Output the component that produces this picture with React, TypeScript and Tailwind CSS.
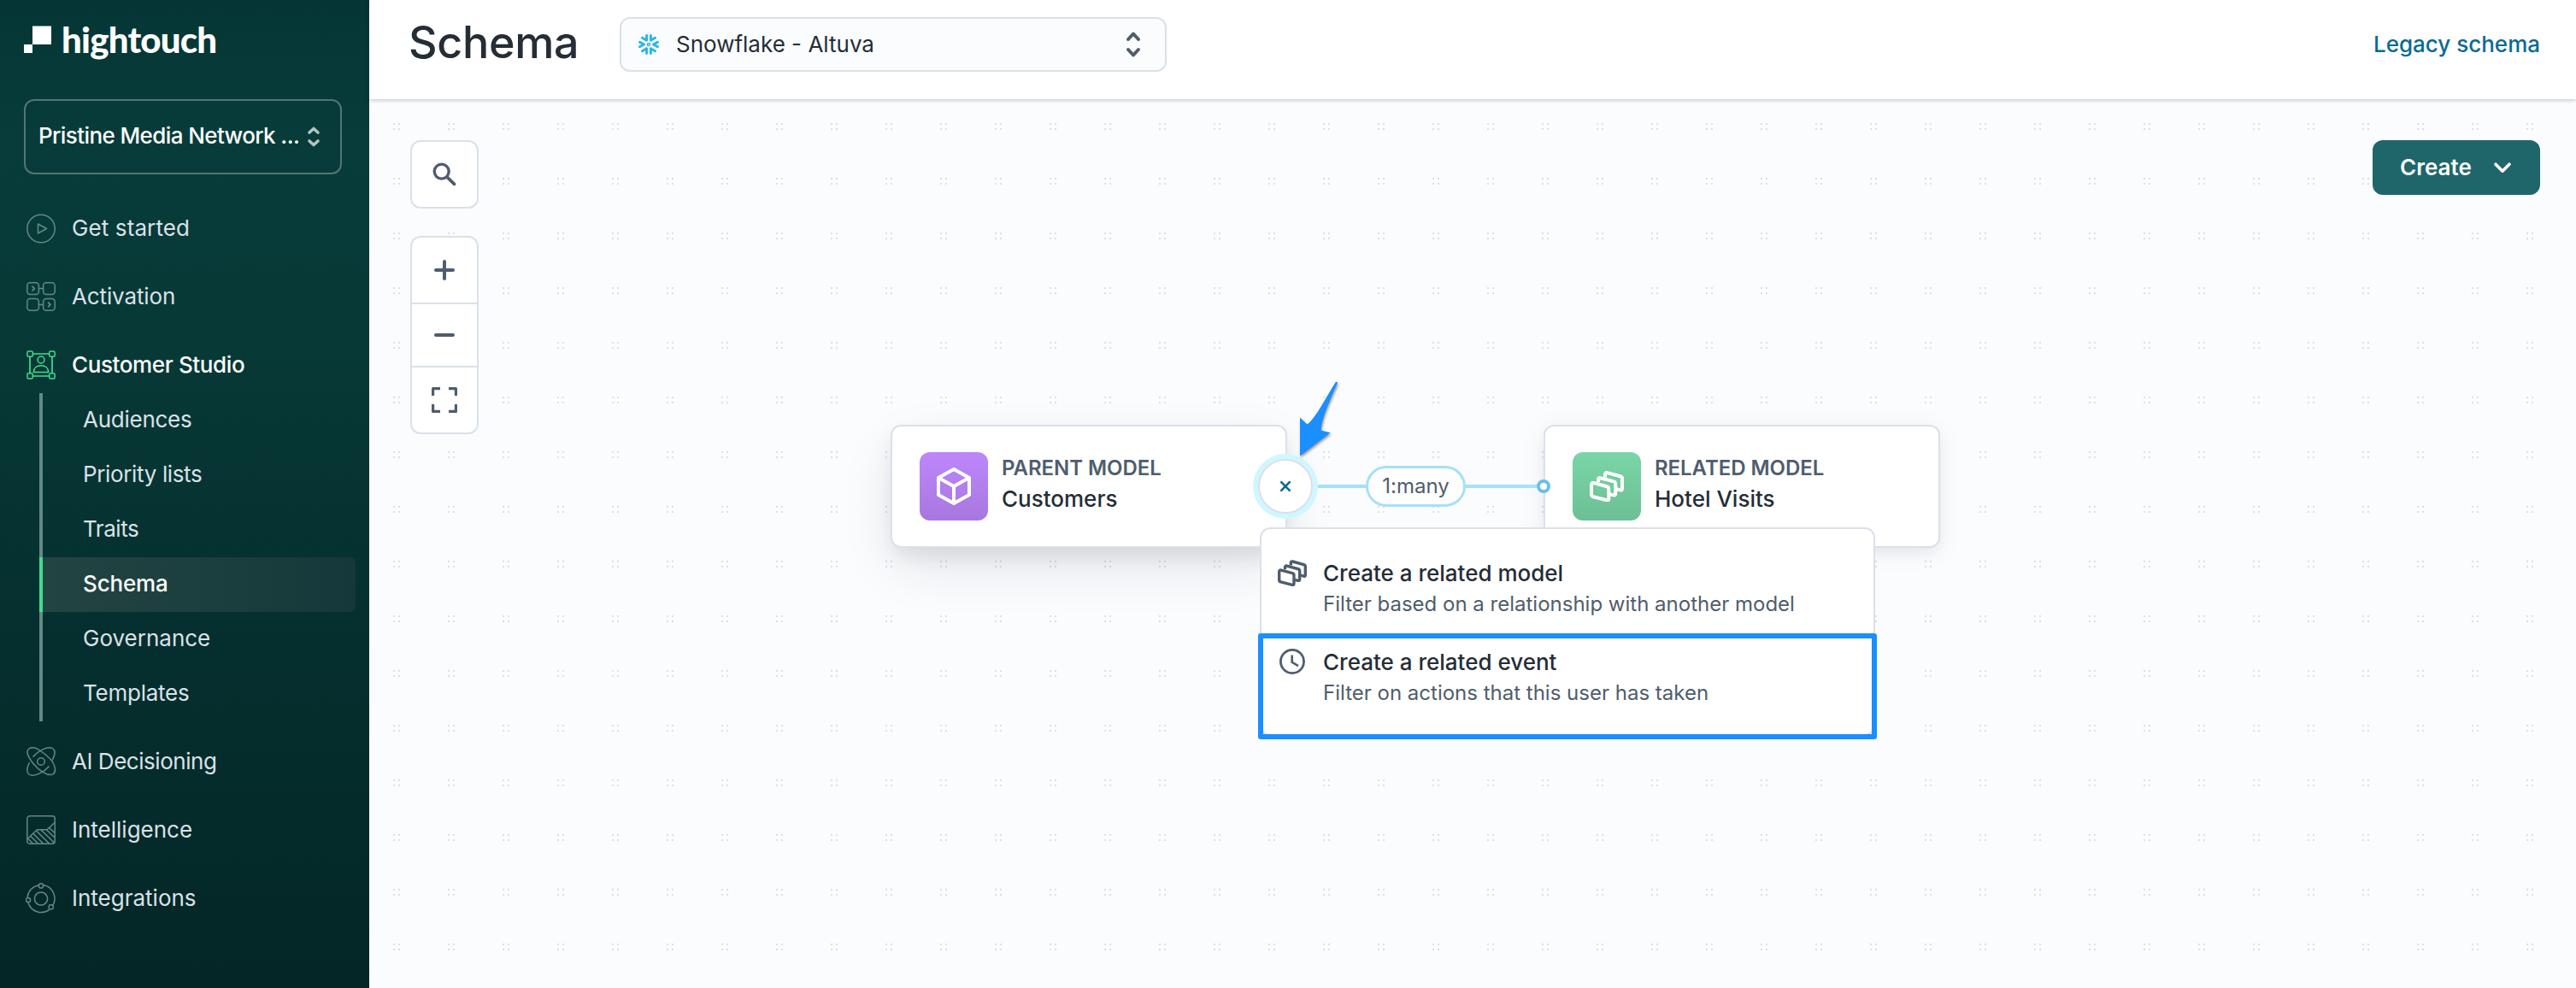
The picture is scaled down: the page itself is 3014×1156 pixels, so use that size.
import type { ReactNode } from "react";

/* ---------- Icons ---------- */

function Chevrons({ className, d }: { className: string; d: string }) {
  return (
    <svg className={className} viewBox="0 0 16 28" fill="none" stroke="currentColor" strokeWidth="3.6" strokeLinecap="round" strokeLinejoin="round">
      <path d={d} />
    </svg>
  );
}

function NavIcon({ children }: { children: ReactNode }) {
  return (
    <svg className="h-9 w-9 shrink-0" viewBox="0 0 36 36" fill="none" stroke="currentColor" strokeWidth="1.5" strokeLinejoin="round">
      {children}
    </svg>
  );
}

function PlayIcon() {
  return (
    <NavIcon>
      <circle cx="18" cy="18.500" r="16.200" />
      <path d="M14.500 13v11l10-5.500z" />
    </NavIcon>
  );
}

function ActivationIcon() {
  return (
    <NavIcon>
      <rect x="1.800" y="1.800" width="13.600" height="13.600" rx="3.500" />
      <rect x="20.600" y="1.800" width="13.600" height="13.600" rx="3.500" />
      <rect x="1.800" y="20.600" width="13.600" height="13.600" rx="3.500" />
      <rect x="20.600" y="20.600" width="13.600" height="13.600" rx="3.500" />
      <path d="M15.400 8.600h5.200M15.400 27.400h5.200" />
      <path d="M7.600 5.800l2.700 2.800-2.700 2.800M26.200 24.600l2.700 2.800-2.700 2.800" strokeWidth="1.800" />
    </NavIcon>
  );
}

function StudioIcon() {
  return (
    <NavIcon>
      <path d="M8.500 5h19M8.500 31h19M5 8.500v19M31 8.500v19" strokeWidth="1.700" />
      <rect x="1.900" y="1.900" width="6.400" height="6.400" rx="1.500" />
      <rect x="27.700" y="1.900" width="6.400" height="6.400" rx="1.500" />
      <rect x="1.900" y="27.700" width="6.400" height="6.400" rx="1.500" />
      <rect x="27.700" y="27.700" width="6.400" height="6.400" rx="1.500" />
      <circle cx="18" cy="12" r="4" />
      <path d="M9.300 26.500c0-5 3.700-7.800 8.700-7.800s8.700 2.800 8.700 7.800z" />
    </NavIcon>
  );
}

function AtomIcon() {
  return (
    <NavIcon>
      <circle cx="18" cy="18" r="4.300" />
      <path d="M8.500 12.500C14 6 26 -1 32 3c4 3 1.500 9-1 13.500M27.500 23.500C22 30 10 37 4 33c-4-3-1.500-10 .5-14" />
      <path d="M31 17.500c4.500 8 4.500 13 .8 15.400C26 36 15 28 9 20.500S-.500 6 4 3c4-2.500 10 0 14 3 7 5 10.500 8.500 13 11.500z" />
    </NavIcon>
  );
}

function IntelligenceIcon() {
  return (
    <NavIcon>
      <rect x="1.800" y="1.800" width="32.400" height="32.400" rx="3" />
      <path d="M2 28.500L13.500 17.800h11.500L34 9.500" />
      <path d="M3 28.500l5.500 5.500M6 25.500l8.500 8.500M9 22.500l11.500 11.500M12.500 19l15 15M18 18l16 15.500M24.500 18l9.500 9M27.500 15.500l6.500 6" strokeWidth="1.700" />
    </NavIcon>
  );
}

function IntegrationsIcon() {
  return (
    <NavIcon>
      <circle cx="18" cy="18.500" r="7.600" />
      <path d="M20.800 2.600A16 16 0 0 1 31.400 27M28 31.200A16 16 0 0 1 2.900 23M2.100 17A16 16 0 0 1 15.300 2.700" />
      <circle cx="18" cy="3.400" r="2.600" />
      <circle cx="3" cy="20" r="2.600" />
      <rect x="27.200" y="25.800" width="5" height="5" rx="1.600" />
    </NavIcon>
  );
}

function CardsIcon({ className }: { className: string }) {
  return (
    <svg className={className} viewBox="0 0 40 36" fill="none" stroke="currentColor" strokeWidth="4" strokeLinejoin="round">
      <path d="M2 16.200c0-1.900 1-2.600 2.700-2.200l15.500 4.200c1.400.4 2.100 1.300 2.100 2.700v11.800c0 1.400-.7 2-2.200 1.600L4.200 30.200C2.700 29.800 2 29 2 27.600z" />
      <path d="M10 13V10.200C10 8.500 11 7.800 12.500 8.200l15.700 4.200c1.400.4 2 1.200 2 2.600v11.800c0 1.300-.8 1.900-2.200 1.600l-4.500-1.200" />
      <path d="M18 7.500V4C18 2.400 19 1.700 20.500 2.100l15.300 4.200c1.500.4 2.200 1.300 2.200 2.700v11.800c0 1.400-.8 2-2.200 1.600l-4.300-1.200" />
    </svg>
  );
}

function CubeIcon() {
  return (
    <svg className="h-11 w-10" viewBox="0 0 40 44" fill="none" stroke="currentColor" strokeWidth="4" strokeLinejoin="round">
      <path d="M20 2l18 10v20L20 42 2 32V12zM2 12l18 10 18-10M20 22v20" />
    </svg>
  );
}

function SnowflakeIcon() {
  return (
    <svg className="h-6 w-6 shrink-0 text-[#29b5e8]" viewBox="0 0 24 24" fill="none" stroke="currentColor" strokeWidth="2.900" strokeLinecap="round" strokeLinejoin="round">
      <circle cx="12" cy="12" r="1.600" strokeWidth="1.500" />
      <path d="M9.600 1.500v5.800L4.500 4.300M14.400 1.500v5.800l5.100-3M9.600 22.500v-5.800l-5.100 3M14.400 22.500v-5.800l5.100 3M1.500 9.200L6.500 12l-5 2.800M22.500 9.200L17.500 12l5 2.800" />
    </svg>
  );
}

/* ---------- Sidebar ---------- */

function NavItem({ icon, label, text, active, className }: { icon: ReactNode; label: string; text: string; active?: boolean; className?: string }) {
  return (
    <a className={`flex h-20 items-center gap-[18px] pl-[30px] ${className ?? ""}`}>
      <span className={active ? "text-[#3ce08f]" : "text-[#628986]"}>{icon}</span>
      <span className={`text-[26px] leading-none whitespace-nowrap ${active ? "font-medium text-white" : "text-[#dbe1e8]"} ${text}`}>{label}</span>
    </a>
  );
}

const subItems = [
  { label: "Audiences", text: "tracking-[-0.26px]" },
  { label: "Priority lists", text: "tracking-[-0.36px]" },
  { label: "Traits", text: "tracking-[-0.45px]" },
  { label: "Schema", text: "tracking-[-0.16px]", active: true },
  { label: "Governance", text: "tracking-normal" },
  { label: "Templates", text: "tracking-[-0.24px]" },
];

function Sidebar() {
  return (
    <aside className="flex w-[432px] shrink-0 flex-col bg-[linear-gradient(180deg,#053635_0%,#073c3a_14%,#073936_35%,#05302f_62%,#042b2a_82%,#042626_100%)]">
      <div className="flex h-[116px] items-start pt-[30px] pl-7">
        <svg className="h-8 w-8" viewBox="0 0 32 32" fill="#fff">
          <path d="M10 .500h22V22H10zM0 22h10v10H0z" />
        </svg>
        <span className="-mt-[8px] ml-3 font-[Lato] text-[42px] leading-[48px] font-black tracking-[-0.8px] text-white">hightouch</span>
      </div>
      <button className="ml-7 flex h-[88px] w-[372px] items-center rounded-xl border-2 border-[#537673] pl-[15px] text-left">
        <span className="w-[314px] pb-0.5 text-[26px] leading-none font-medium tracking-[-0.6px] whitespace-nowrap text-white">Pristine Media Network ...</span>
        <Chevrons className="h-7 w-4 text-[#b4c4c3]" d="M3 9l5-4.500L13 9M3 19l5 4.500L13 19" />
      </button>
      <nav className="mt-[23px] flex flex-col">
        <NavItem icon={<PlayIcon />} label="Get started" text="tracking-[0.11px]" />
        <NavItem icon={<ActivationIcon />} label="Activation" text="tracking-[-0.12px]" />
        <NavItem icon={<StudioIcon />} label="Customer Studio" text="tracking-[-0.38px]" active />
        <div className="-mt-[7px] mr-4 ml-[46px] flex flex-col">
          {subItems.map((s) => (
            <a
              key={s.label}
              className={`flex h-16 items-center border-l-4 pb-0.5 pl-[47px] text-[26px] leading-none ${s.text} ${
                s.active
                  ? "rounded-r-lg border-[#3ce08f] bg-linear-to-r from-[#224543] to-[#15393a] font-medium text-white"
                  : "border-[#628986] text-[#dbe1e8]"
              }`}
            >
              {s.label}
            </a>
          ))}
        </div>
        <NavItem icon={<AtomIcon />} label="AI Decisioning" text="tracking-[-0.46px]" className="mt-[7px]" />
        <NavItem icon={<IntelligenceIcon />} label="Intelligence" text="tracking-normal" />
        <NavItem icon={<IntegrationsIcon />} label="Integrations" text="tracking-normal" />
      </nav>
    </aside>
  );
}

/* ---------- Header ---------- */

function Header() {
  return (
    <header className="relative z-10 flex h-[116px] shrink-0 items-start bg-white pr-[42px] pl-[46px] shadow-[0_2px_4px_rgba(30,41,59,0.16),0_0_6px_rgba(30,41,59,0.08)]">
      <h1 className="w-[247px] pt-5 text-[52px] leading-[60px] font-medium tracking-[-0.3px] text-[#252d36]">Schema</h1>
      <div className="mt-5 flex h-16 w-[640px] items-center rounded-xl border-2 border-[#dbe1e8] bg-[#fbfcfe] pr-[27px] pl-5">
        <SnowflakeIcon />
        <span className="ml-5 grow text-[26px] leading-none text-[#252d36]">Snowflake - Altuva</span>
        <svg className="h-9 w-5 text-[#4f5d6d]" viewBox="0 0 20 36" fill="none" stroke="currentColor" strokeWidth="4" strokeLinecap="round" strokeLinejoin="round">
          <path d="M4 12l6-6.500 6 6.500M4 24l6 6.500 6-6.500" />
        </svg>
      </div>
      <a className="mt-5 ml-auto flex h-16 items-center text-[26px] leading-none font-medium text-[#0b6a91]">Legacy schema</a>
    </header>
  );
}

/* ---------- Canvas ---------- */

function DotGrid() {
  return (
    <svg className="absolute inset-0 h-full w-full" shapeRendering="crispEdges">
      <pattern id="dots" x="28" y="28" width="64" height="64" patternUnits="userSpaceOnUse">
        <path d="M0 0h2v2H0zM6 0h2v2H6zM0 6h2v2H0zM6 6h2v2H6z" fill="#dcdfe7" />
      </pattern>
      <rect width="100%" height="100%" fill="url(#dots)" />
    </svg>
  );
}

function CanvasControls() {
  return (
    <div className="flex flex-col gap-8 text-[#4f5d6d]">
      <button className="flex h-20 w-20 items-center justify-center rounded-xl border-2 border-[#dbe1e8] bg-white">
        <svg className="h-8 w-8" viewBox="0 0 32 32" fill="none" stroke="currentColor" strokeWidth="3.400" strokeLinecap="round">
          <circle cx="12.700" cy="12.600" r="8.500" />
          <path d="M19.300 19.300l8.200 8" strokeWidth="3.800" />
        </svg>
      </button>
      <div className="flex h-[232px] w-20 flex-col overflow-hidden rounded-xl border-2 border-[#dbe1e8] bg-white">
        <button className="flex h-[78px] items-center justify-center border-b-2 border-[#dbe1e8]">
          <svg className="h-7 w-7" viewBox="0 0 28 28" fill="none" stroke="currentColor" strokeWidth="4" strokeLinecap="round">
            <path d="M14 4v20M4 14h20" />
          </svg>
        </button>
        <button className="flex h-[74px] items-center justify-center border-b-2 border-[#dbe1e8]">
          <svg className="h-7 w-7" viewBox="0 0 28 28" fill="none" stroke="currentColor" strokeWidth="4" strokeLinecap="round">
            <path d="M4 14h20" />
          </svg>
        </button>
        <button className="flex grow items-center justify-center">
          <svg className="h-8 w-8" viewBox="0 0 32 32" fill="none" stroke="currentColor" strokeWidth="3.200" strokeLinejoin="round">
            <path d="M11 2.600H2.600V11M21 2.600h8.400V11M11 29.400H2.600V21M21 29.400h8.400V21" />
          </svg>
        </button>
      </div>
    </div>
  );
}

function ModelNode({ kind, name, icon, tile, shadow, position }: { kind: string; name: string; icon: ReactNode; tile: string; shadow: string; position: string }) {
  return (
    <div className={`absolute flex h-36 w-[464px] items-center gap-4 rounded-xl border-2 border-[#dbe1e8] bg-white pl-8 ${shadow} ${position}`}>
      <div className={`flex h-20 w-20 items-center justify-center rounded-xl bg-linear-to-b text-white ${tile}`}>{icon}</div>
      <div className="flex flex-col pb-1.5">
        <span className="text-[24px] leading-9 font-semibold tracking-[-0.05px] text-[#4f5d6d]">{kind}</span>
        <span className="text-[26px] leading-9 font-medium text-[#252d36]">{name}</span>
      </div>
    </div>
  );
}

function MenuItem({ icon, title, text }: { icon: ReactNode; title: string; text: string }) {
  return (
    <div className="flex h-[104px] items-start pl-[19px]">
      <span className="mt-px flex h-8 w-[53px] items-center text-[#4f5d6d]">{icon}</span>
      <span className="flex flex-col whitespace-nowrap">
        <span className="text-[26px] leading-9 font-medium text-[#252d36]">{title}</span>
        <span className="text-[24px] leading-9 text-[#4f5d6d]">{text}</span>
      </span>
    </div>
  );
}

function RelationMenu() {
  return (
    <div className="absolute top-[501px] left-[1042px] h-[244px] w-[720px] rounded-xl border-2 border-[#dbe1e8] bg-white pt-[34px]">
      <MenuItem icon={<CardsIcon className="h-[31px] w-[34px]" />} title="Create a related model" text="Filter based on a relationship with another model" />
      <MenuItem
        icon={
          <svg className="ml-px h-8 w-8" viewBox="0 0 32 32" fill="none" stroke="currentColor" strokeWidth="2.800">
            <circle cx="16" cy="16" r="13.600" />
            <path d="M15.700 8.400v8.400l7.300 4.400" strokeWidth="2.600" />
          </svg>
        }
        title="Create a related event"
        text="Filter on actions that this user has taken"
      />
    </div>
  );
}

function Diagram() {
  return (
    <>
      <ModelNode
        kind="PARENT MODEL"
        name="Customers"
        icon={<CubeIcon />}
        tile="from-[#bd87fb] to-[#a877de]"
        shadow="shadow-[0_24px_64px_-8px_rgba(30,41,59,0.13),0_12px_24px_-4px_rgba(30,41,59,0.10)]"
        position="left-[610px] top-[381px]"
      />
      <ModelNode
        kind="RELATED MODEL"
        name="Hotel Visits"
        icon={<CardsIcon className="h-9 w-10" />}
        tile="from-[#7ad6a6] to-[#6cbf94]"
        shadow="shadow-[0_4px_32px_rgba(30,41,59,0.06),0_8px_16px_-4px_rgba(30,41,59,0.07)]"
        position="left-[1374px] top-[381px]"
      />
      <div className="absolute top-[445px] left-[1100px] flex w-[282px] items-center">
        <span className="h-1 w-[66px] bg-[#a5e0f9]" />
        <span className="-my-4 flex h-12 w-[117px] items-center justify-center rounded-full border-3 border-[#a5e0f9] bg-white text-[24px] leading-none text-[#4f5d6d]">1:many</span>
        <span className="h-1 grow bg-[#a5e0f9]" />
        <span className="h-4 w-4 rounded-full border-4 border-[#68c0e8] bg-white" />
      </div>
      <button className="absolute top-[415px] left-[1034px] flex h-[76px] w-[76px] items-center justify-center rounded-full bg-[#cff7ff]">
        <span className="flex h-16 w-16 items-center justify-center rounded-full border-2 border-[#dcdfe9] bg-white text-[#076b92]">
          <svg className="h-4 w-4" viewBox="0 0 16 16" fill="none" stroke="currentColor" strokeWidth="2.600" strokeLinecap="round">
            <path d="M3.200 3.200l9.600 9.600M12.800 3.200l-9.600 9.600" />
          </svg>
        </span>
      </button>
      <RelationMenu />
      <div className="absolute top-[625px] left-[1040px] h-[124px] w-[724px] rounded-[3px] border-6 border-[#1a8fff]" />
      <svg className="absolute top-[326px] left-[1080px] h-24 w-16 drop-shadow-[1px_2px_1.5px_rgba(0,0,0,0.4)]" viewBox="0 0 64 96" fill="#1a8fff">
        <path d="M50.500 5.500C51.500 4 53.500 4.600 52.800 6.600C47 20 35 44 33.600 61.500L44.600 64.200L9 91.500V46.600L17.400 54.600C27 48 40 22 50.500 5.500z" />
      </svg>
    </>
  );
}

export default function App() {
  return (
    <div className="flex h-[1156px] w-full overflow-hidden bg-[#fbfcfe] font-[Inter,sans-serif]">
      <Sidebar />
      <div className="flex grow flex-col">
        <Header />
        <main className="relative grow overflow-hidden">
          <DotGrid />
          <div className="relative flex items-start justify-between pt-12 pr-[42px] pl-12">
            <CanvasControls />
            <button className="flex h-16 w-[196px] items-center rounded-xl bg-[#1f666b] pl-8 text-[26px] leading-none font-semibold text-white">
              Create
              <svg className="ml-[17px] h-8 w-8 translate-x-[3px]" viewBox="0 0 32 32" fill="none" stroke="currentColor" strokeWidth="3.600" strokeLinecap="round" strokeLinejoin="round">
                <path d="M8 12.200l8 8 8-8" />
              </svg>
            </button>
          </div>
          <Diagram />
        </main>
      </div>
    </div>
  );
}
